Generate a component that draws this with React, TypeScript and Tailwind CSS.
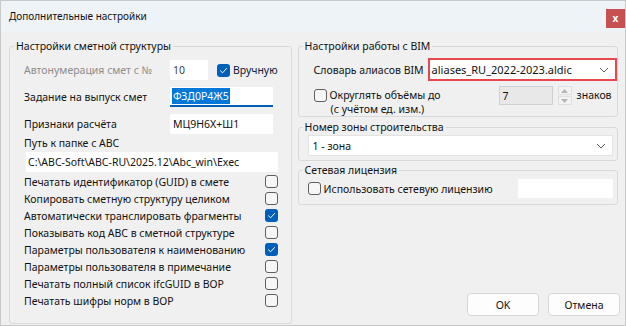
import React from 'react';

const Check = ({ checked }: { checked?: boolean }) =>
  checked ? (
    <span className="flex h-[13px] w-[13px] shrink-0 items-center justify-center rounded-[3px] bg-[#005fb8]">
      <svg width="9" height="7" viewBox="0 0 9 7">
        <path d="M1.2 3.6 L3.6 5.8 L7.8 1.2" fill="none" stroke="#ffffff" strokeWidth="1" />
      </svg>
    </span>
  ) : (
    <span className="block h-[13px] w-[13px] shrink-0 rounded-[3px] border border-[#5f5f5f] bg-[#f6f6f6]" />
  );

const Chevron = () => (
  <svg width="10" height="6" viewBox="0 0 10 6" className="shrink-0">
    <path d="M1 1 L5 5 L9 1" fill="none" stroke="#5c5c5c" strokeWidth="1" />
  </svg>
);

const Group = ({
  title,
  className,
  inner,
  children,
}: {
  title: string;
  className?: string;
  inner?: string;
  children: React.ReactNode;
}) => (
  <fieldset className={`rounded-[3px] border border-[#d9d9d9] ${className ?? ''}`}>
    <legend className="ml-[4px] px-[2px] leading-[16px]">{title}</legend>
    <div className={inner}>{children}</div>
  </fieldset>
);

const leftChecks: [string, boolean][] = [
  ['Печатать идентификатор (GUID) в смете', false],
  ['Копировать сметную структуру целиком', false],
  ['Автоматически транслировать фрагменты', true],
  ['Показывать код ABC в сметной структуре', false],
  ['Параметры пользователя к наименованию', true],
  ['Параметры пользователя в примечание', false],
  ['Печатать полный список ifcGUID в ВОР', false],
  ['Печатать шифры норм в ВОР', false],
];

export default function App() {
  return (
    <div className="flex h-[326px] w-[626px] flex-col whitespace-nowrap border border-[#c9c9c9] bg-[#f0f0f0] font-['Noto_Sans',sans-serif] text-[10.5px] leading-[16px] text-[#111]">
      {/* Title bar */}
      <div className="flex h-[30px] shrink-0 items-center justify-between bg-[#eef3f8] pl-[8px]">
        <span className="text-[10px]">Дополнительные настройки</span>
        <span className="mt-[4px] flex h-[19px] w-[19px] items-center justify-center bg-[#c75050] text-[10px] font-bold leading-none text-white">
          x
        </span>
      </div>

      {/* Body */}
      <div className="flex flex-1 gap-[6px] pb-[1px] pl-[8px] pr-[7px] pt-[7px]">
        {/* Left group */}
        <Group
          title="Настройки сметной структуры"
          className="w-[281px]"
          inner="flex flex-col pl-[14px] pr-[13px]"
        >
          <div className="mt-[6px] flex h-[20px] items-center">
            <span className="w-[146px] text-[#8c8c8c]">Автонумерация смет с №</span>
            <span className="flex h-[20px] w-[38px] items-center bg-white pl-[3px] text-[#444]">10</span>
            <span className="ml-[9px]">
              <Check checked />
            </span>
            <span className="ml-[3px] text-[#0b1a3a]">Вручную</span>
          </div>
          <div className="mt-[7px] flex h-[20px] items-center">
            <span className="w-[146px]">Задание на выпуск смет</span>
            <span className="flex h-[20px] w-[103px] items-center border-b-2 border-[#005fb8] bg-white pl-[2px]">
              <span className="bg-[#0078d7] px-[1px] text-white">ФЗД0Р4Ж5</span>
            </span>
          </div>
          <div className="mt-[7px] flex h-[20px] items-center">
            <span className="w-[146px]">Признаки расчёта</span>
            <span className="flex h-[20px] w-[103px] items-center bg-white pl-[3px]">МЦ9Н6Х+Ш1</span>
          </div>
          <div className="flex h-[18px] items-center">Путь к папке с ABC</div>
          <div className="ml-[2px] flex h-[20px] items-center bg-white pl-[2px]">
            C:\ABC-Soft\ABC-RU\2025.12\Abc_win\Exec
          </div>
          <div className="mt-[1px] flex flex-col">
            {leftChecks.map(([label, on]) => (
              <div key={label} className="flex h-[17px] items-center justify-between">
                <span>{label}</span>
                <Check checked={on} />
              </div>
            ))}
          </div>
        </Group>

        {/* Right column */}
        <div className="flex w-[321px] flex-col">
          <Group title="Настройки работы с BIM" className="h-[79px]" inner="pl-[15px]">
            <div className="mt-[4px] flex items-center">
              <span className="w-[114px]">Словарь алиасов BIM</span>
              <span className="flex h-[23px] w-[189px] items-center justify-between border-2 border-[#e8474b] bg-white pl-[2px] pr-[6px] text-[11px]">
                <span>aliases_RU_2022-2023.aldic</span>
                <Chevron />
              </span>
            </div>
            <div className="mt-[5px] flex items-start">
              <span className="mt-[3px]">
                <Check />
              </span>
              <span className="ml-[3px] w-[169px] leading-[13px]">
                <span className="block pt-[3px]">Округлять объёмы до</span>
                <span className="block pl-[1px] pt-[1px]">(с учётом ед. изм.)</span>
              </span>
              <span className="flex h-[19px] w-[54px] items-center border border-[#d0d0d0] bg-[#e8e8e8] pl-[3px]">7</span>
              <span className="ml-[5px] flex h-[19px] w-[14px] flex-col gap-[1px]">
                <span className="flex flex-1 items-center justify-center border border-[#e0e0e0] bg-[#f3f3f3]">
                  <svg width="7" height="4" viewBox="0 0 7 4">
                    <path d="M0 4 L3.5 0 L7 4 Z" fill="#b5b5b5" />
                  </svg>
                </span>
                <span className="flex flex-1 items-center justify-center border border-[#e0e0e0] bg-[#f3f3f3]">
                  <svg width="7" height="4" viewBox="0 0 7 4">
                    <path d="M0 0 L3.5 4 L7 0 Z" fill="#b5b5b5" />
                  </svg>
                </span>
              </span>
              <span className="ml-[5px] pt-[1px]">знаков</span>
            </div>
          </Group>

          <Group title="Номер зоны строительства" className="mt-[2px] h-[42px]" inner="pl-[9px]">
            <div className="flex h-[21px] w-[305px] items-center justify-between border border-[#e3e3e3] bg-white pl-[4px] pr-[6px]">
              <span>1 - зона</span>
              <Chevron />
            </div>
          </Group>

          <Group title="Сетевая лицензия" className="mt-[1px] h-[43px]" inner="pl-[9px]">
            <div className="mt-[1px] flex items-center">
              <Check />
              <span className="ml-[3px] w-[194px]">Использовать сетевую лицензию</span>
              <span className="h-[19px] w-[95px] bg-white" />
            </div>
          </Group>

          <div className="mb-[8px] mr-[-2px] mt-auto flex justify-end gap-[9px]">
            <button className="flex h-[23px] w-[72px] items-center justify-center rounded-[4px] border border-[#d6d6d6] bg-[#fdfdfd]">
              OK
            </button>
            <button className="flex h-[23px] w-[72px] items-center justify-center rounded-[4px] border border-[#d6d6d6] bg-[#fdfdfd]">
              Отмена
            </button>
          </div>
        </div>
      </div>
    </div>
  );
}
